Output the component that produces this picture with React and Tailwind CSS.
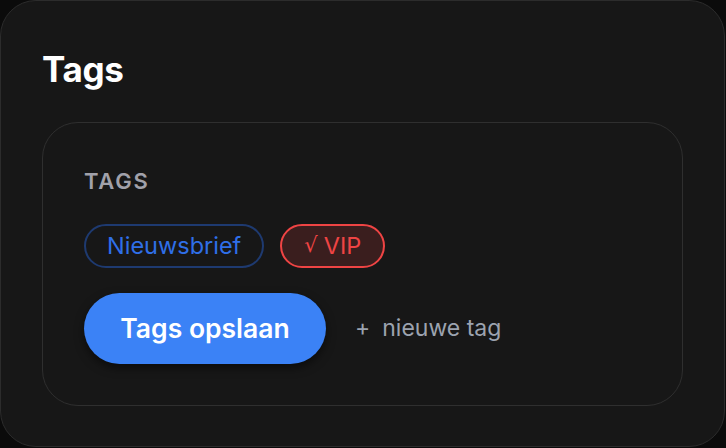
export default function App() {
  return (
    <div className="w-[726px] h-[448px] bg-[#0b0b0b] font-['Inter',sans-serif]">
      <div className="w-[725px] h-[447px] rounded-[36px] border border-[#2c2c2c] bg-[#171717] px-[41px] pt-[44px]">
        <h1 className="text-[35px] leading-[48px] font-bold text-white tracking-[-0.01em]">Tags</h1>

        <div className="mt-[29px] rounded-[36px] border border-[#2f2f2f] bg-[#171717] h-[284px] px-[41px] pt-[44px]">
          <p className="text-[22px] leading-[28px] font-semibold text-[#a1a1aa] tracking-[0.08em]">TAGS</p>

          <div className="mt-[29px] flex items-center gap-[16px]">
            <span className="h-[44px] flex items-center rounded-full border-2 border-[#1e3a70] px-[21px] text-[23.5px] text-[#2f6fe8]">
              Nieuwsbrief
            </span>
            <span className="h-[44px] flex items-center gap-[6px] rounded-full border-2 border-[#ef4444] bg-[#3a1e1e] px-[22px] text-[23.5px] text-[#ef4444]">
              <span className="font-['DejaVu_Sans',sans-serif] text-[21px]">√</span>
              <span>VIP</span>
            </span>
          </div>

          <div className="mt-[25px] flex items-center gap-[29px]">
            <button className="h-[71px] w-[242px] rounded-full bg-[#3b82f6] text-white text-[26.5px] font-semibold shadow-[0_4px_10px_rgba(0,0,0,0.5)]">
              Tags opslaan
            </button>
            <button className="flex items-center gap-[12px] text-[23px] text-[#9ca3af]">
              <span>+</span>
              <span>nieuwe tag</span>
            </button>
          </div>
        </div>
      </div>
    </div>
  );
}
